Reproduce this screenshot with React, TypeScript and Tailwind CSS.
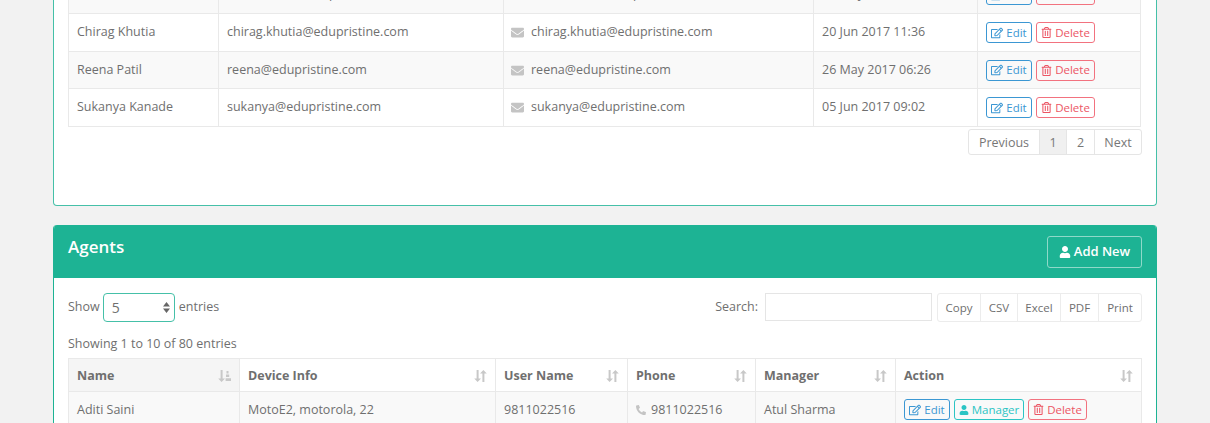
import { FaEnvelope, FaPhoneAlt, FaRegEdit, FaRegTrashAlt, FaUser } from "react-icons/fa"

const FONT = "font-['Open_Sans',sans-serif]"

const users = [
  { name: "Anil Sharma", email: "anil.sharma@edupristine.com", date: "26 May 2017 10:14", height: "h-[38px]" },
  { name: "Chirag Khutia", email: "chirag.khutia@edupristine.com", date: "20 Jun 2017 11:36", height: "h-[38px]" },
  { name: "Reena Patil", email: "reena@edupristine.com", date: "26 May 2017 06:26", height: "h-[37px]" },
  { name: "Sukanya Kanade", email: "sukanya@edupristine.com", date: "05 Jun 2017 09:02", height: "h-[38px]" },
]

const exportButtons = [
  { label: "Copy", width: "w-[42px]" },
  { label: "CSV", width: "w-[37px]" },
  { label: "Excel", width: "w-[43px]" },
  { label: "PDF", width: "w-[38px]" },
  { label: "Print", width: "w-[43px]" },
]

function EditButton() {
  return (
    <button className="flex h-[21px] w-[46px] items-center justify-center gap-[3px] rounded-[3px] border border-[#3b97d3] text-[11.5px] text-[#3b97d3]">
      <FaRegEdit className="text-xs" />
      Edit
    </button>
  )
}

function DeleteButton() {
  return (
    <button className="flex h-[21px] w-[59px] items-center justify-center gap-[3px] rounded-[3px] border border-[#f2727f] text-[11.5px] text-[#ec5564]">
      <FaRegTrashAlt className="text-[11px]" />
      Delete
    </button>
  )
}

function SortIcon({ active }: { active?: boolean }) {
  return (
    <svg className="h-3 w-[13px] text-[#c8c8c8]" viewBox="0 0 13 12" fill="currentColor">
      <path d="M2.6 0h2v8.5H7L3.6 12 .2 8.5h2.4z" />
      {active ? (
        <path d="M8.5 1h2v2.4h-2zM8 4.6h3.2V7H8zM7.6 8.2H13V11H7.6z" />
      ) : (
        <path d="M8.4 12h2V3.5h2.4L9.4 0 6 3.5h2.4z" />
      )}
    </svg>
  )
}

function App() {
  return (
    <div className={`h-screen overflow-hidden bg-[#f2f2f2] px-[53px] ${FONT}`}>
      {/* Users card, scrolled past its top edge */}
      <div className="-mt-[25px] rounded-b border border-t-0 border-[#45c0a8] bg-white pr-[15px] pb-[50px] pl-[14px]">
        <table className="w-full table-fixed border-collapse text-[12.5px] text-[#6f6f6f]">
          <tbody>
            {users.map((user, i) => (
              <tr key={user.name} className={`${user.height} ${i % 2 === 0 ? "bg-[#f9f9f9]" : "bg-white"}`}>
                <td className="w-[150px] border border-[#e9e9e9] pl-2 align-middle">{user.name}</td>
                <td className="w-[285px] border border-[#e9e9e9] pl-2">{user.email}</td>
                <td className="w-[310px] border border-[#e9e9e9] pl-[7px]">
                  <span className="flex items-center gap-[7px]">
                    <FaEnvelope className="text-[13px] text-[#c4c4c4]" />
                    {user.email}
                  </span>
                </td>
                <td className="w-[164px] border border-[#e9e9e9] pl-2">{user.date}</td>
                <td className="border border-[#e9e9e9] pl-2">
                  <div className="flex gap-1">
                    <EditButton />
                    <DeleteButton />
                  </div>
                </td>
              </tr>
            ))}
          </tbody>
        </table>
        <div className="mt-[2px] -mr-px flex justify-end">
          <div className="flex h-[26px] items-center rounded-[3px] border border-[#e5e5e5] text-[12.5px] text-[#777]">
            <span className="flex h-full w-[70px] items-center justify-center pt-[2px]">Previous</span>
            <span className="flex h-full w-[27px] items-center justify-center border-l border-[#e5e5e5] bg-[#f0f0f0] pt-[2px]">1</span>
            <span className="flex h-full w-[28px] items-center justify-center border-l border-[#e5e5e5] pt-[2px]">2</span>
            <span className="flex h-full w-[47px] items-center justify-center border-l border-[#e5e5e5] pt-[2px]">Next</span>
          </div>
        </div>
      </div>

      {/* Agents card */}
      <div className="mt-[19px] overflow-hidden rounded-t border-x border-[#1db394] bg-white">
        <div className="flex h-[53px] items-start justify-between bg-[#1db394] px-[14px] pt-[10px]">
          <h2 className="text-[17px] leading-6 font-semibold text-white">Agents</h2>
          <button className="mt-px flex h-[32px] w-[95px] items-center justify-center gap-[3px] rounded-[3px] border border-[#8fd9c9] text-[13px] font-semibold text-white">
            <FaUser className="text-xs" />
            Add New
          </button>
        </div>

        <div className="px-[14px] pt-[15px] text-[12.5px] text-[#6f6f6f]">
          <div className="flex items-start justify-between">
            <div className="flex h-[29px] items-center">
              <span>Show</span>
              <div className="mr-1 ml-[3px] flex h-[29px] w-[72px] items-center justify-between rounded border border-[#45c0a8] pr-[4px] pl-2 text-sm">
                5
                <svg className="h-[11px] w-[7px] text-[#666]" viewBox="0 0 7 11" fill="currentColor">
                  <path d="M3.5 0 7 4.5H0zM3.5 11 0 6.5h7z" />
                </svg>
              </div>
              <span>entries</span>
            </div>
            <div className="flex items-start">
              <span className="mr-[7px] leading-[27px]">Search:</span>
              <div className="h-[28px] w-[167px] border border-[#e5e5e5]" />
              <div className="ml-[5px] flex h-[29px] rounded-[3px] border border-[#ececec] text-[11.5px]">
                {exportButtons.map((button, i) => (
                  <span
                    key={button.label}
                    className={`flex items-center justify-center border-[#ececec] ${i > 0 ? "border-l" : ""} ${button.width}`}
                  >
                    {button.label}
                  </span>
                ))}
              </div>
            </div>
          </div>

          <p className="mt-[13px] leading-[18px]">Showing 1 to 10 of 80 entries</p>

          <table className="mt-[5px] w-full table-fixed border-collapse">
            <thead>
              <tr className="h-[33px] font-bold">
                <th className="w-[171px] border border-[#e9e9e9] bg-[#f5f5f5] px-2 pt-[2px] text-left">
                  <span className="flex items-center justify-between">Name<SortIcon active /></span>
                </th>
                <th className="w-[256px] border border-[#e9e9e9] px-2 pt-[2px] text-left">
                  <span className="flex items-center justify-between">Device Info<SortIcon /></span>
                </th>
                <th className="w-[132px] border border-[#e9e9e9] px-2 pt-[2px] text-left">
                  <span className="flex items-center justify-between">User Name<SortIcon /></span>
                </th>
                <th className="w-[128px] border border-[#e9e9e9] px-2 pt-[2px] text-left">
                  <span className="flex items-center justify-between">Phone<SortIcon /></span>
                </th>
                <th className="w-[140px] border border-[#e9e9e9] px-2 pt-[2px] text-left">
                  <span className="flex items-center justify-between">Manager<SortIcon /></span>
                </th>
                <th className="border border-[#e9e9e9] px-2 pt-[2px] text-left">
                  <span className="flex items-center justify-between">Action<SortIcon /></span>
                </th>
              </tr>
            </thead>
            <tbody>
              <tr className="h-[38px] bg-[#f9f9f9]">
                <td className="border border-[#e9e9e9] pb-px pl-2">Aditi Saini</td>
                <td className="border border-[#e9e9e9] pb-px pl-2">MotoE2, motorola, 22</td>
                <td className="border border-[#e9e9e9] pb-px pl-2">9811022516</td>
                <td className="border border-[#e9e9e9] pb-px pl-2">
                  <span className="flex items-center gap-[5px]">
                    <FaPhoneAlt className="text-[10px] text-[#c4c4c4]" />
                    9811022516
                  </span>
                </td>
                <td className="border border-[#e9e9e9] pb-px pl-2">Atul Sharma</td>
                <td className="border border-[#e9e9e9] pb-[2px] pl-2">
                  <div className="flex gap-1">
                    <EditButton />
                    <button className="flex h-[21px] w-[70px] items-center justify-center gap-[3px] rounded-[3px] border border-[#2bc4c4] text-[11.5px] text-[#2bc4c4]">
                      <FaUser className="text-[10px]" />
                      Manager
                    </button>
                    <DeleteButton />
                  </div>
                </td>
              </tr>
            </tbody>
          </table>
        </div>
      </div>
    </div>
  )
}

export default App
